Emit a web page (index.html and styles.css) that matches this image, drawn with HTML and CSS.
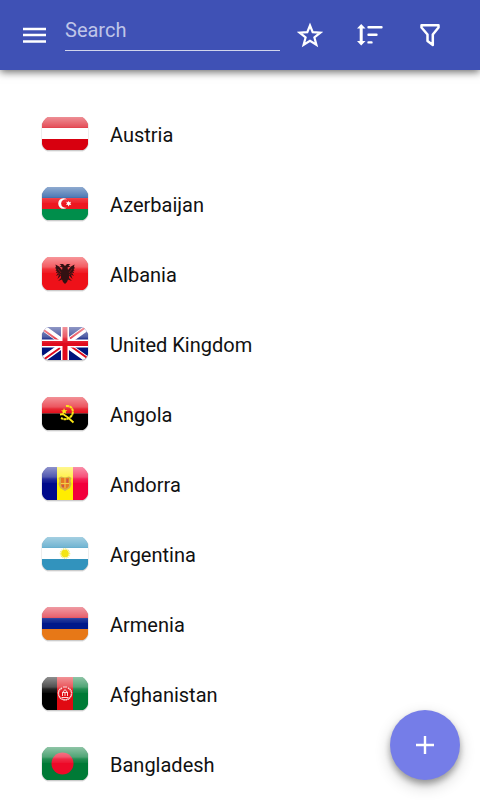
FILE: index.html
```
<!DOCTYPE html>
<html lang="en">
<head>
<meta charset="utf-8">
<meta name="viewport" content="width=device-width, initial-scale=1">
<title>Countries</title>
<link rel="stylesheet" href="styles.css">
</head>
<body>
<svg class="defs" aria-hidden="true">
  <defs>
    <clipPath id="shape"><path d="M7 1H41Q43 1.500 45 4.500L47 8V28Q46 32 42 34H6Q2 32 1 28V8L3 4.500Q5 1.500 7 1Z"/></clipPath>
    <linearGradient id="shine" x1="0" y1="0" x2="0" y2="1">
      <stop offset="0" stop-color="#fff" stop-opacity=".56"/>
      <stop offset=".62" stop-color="#fff" stop-opacity=".32"/>
      <stop offset=".75" stop-color="#fff" stop-opacity=".14"/>
      <stop offset="1" stop-color="#fff" stop-opacity=".04"/>
    </linearGradient>
    <g id="shadow"><path d="M7 2H41Q43 2.500 45 5L47 8V29Q46 33 42 35H6Q2 33 1 29V8L3 5Q5 2.500 7 2Z" fill="#bbb" stroke="#ddd" stroke-width="1"/></g>
    <g id="gloss"><path d="M1 1H47V17H1Z" fill="url(#shine)"/></g>
  </defs>
</svg>

<header class="bar">
  <button class="icon-button" type="button" aria-label="Menu">
    <svg width="24" height="18" viewBox="0 0 24 18"><path d="M0 3H23M0 9H23M0 15.500H23" stroke="#fff" stroke-width="2.500"/></svg>
  </button>
  <input class="search" type="search" placeholder="Search" aria-label="Search">
  <nav class="actions">
    <button class="icon-button" type="button" aria-label="Favorites">
      <svg width="26" height="26" viewBox="0 0 26 26"><path d="M13 3.500L15.700 10.200L23.300 10.700L17.400 15.500L19.400 22.800L13 18.900L6.600 22.800L8.600 15.500L2.700 10.700L10.300 10.200Z" fill="none" stroke="#fff" stroke-width="2.200"/></svg>
    </button>
    <button class="icon-button" type="button" aria-label="Sort">
      <svg width="26" height="26" viewBox="0 0 26 26" fill="#fff"><path d="M4.200 2L8.500 6.500H5.700V19H8.500L4.200 23.500L0 19H2.700V6.500H0Z"/><path d="M11.500 5.200H24.500M11.500 12.800H19.500M11.500 20.400H14.500" stroke="#fff" stroke-width="2.400" stroke-linecap="round"/></svg>
    </button>
    <button class="icon-button" type="button" aria-label="Filter">
      <svg width="26" height="26" viewBox="0 0 26 26"><path d="M4.500 3.300H21.500V5.500L15.800 12.500V23L10.500 19V12.500L4.500 5.500Z" fill="none" stroke="#fff" stroke-width="2.500" stroke-linejoin="round"/></svg>
    </button>
  </nav>
</header>

<main>
  <ul class="countries">
    <li><a class="country" href="#austria">
      <svg class="flag" viewBox="0 1 48 36" aria-hidden="true"><use href="#shadow"/><g clip-path="url(#shape)"><path fill="#d8000f" d="M1 1H47V34H1Z"/><path fill="#fff" d="M1 12H47V23H1Z"/><use href="#gloss"/></g></svg>
      <span>Austria</span></a></li>
    <li><a class="country" href="#azerbaijan">
      <svg class="flag" viewBox="0 1 48 36" aria-hidden="true"><use href="#shadow"/><g clip-path="url(#shape)"><path fill="#003f94" d="M1 1H47V12H1Z"/><path fill="#ed1720" d="M1 12H47V23H1Z"/><path fill="#008e4b" d="M1 23H47V34H1Z"/><use href="#gloss"/><path fill="#fff" d="M26 13.500A5.300 5.300 0 1 0 26 21.500A4.300 4.300 0 1 1 26 13.500Z"/><path fill="#fff" d="M27.500 14.700L28.200 16.300L30 15.700L29.300 17.400L30.300 18.900L28.500 18.800L27.500 20.400L26.700 18.800L25 18.900L26 17.400L25.200 15.700L26.900 16.200Z"/></g></svg>
      <span>Azerbaijan</span></a></li>
    <li><a class="country" href="#albania">
      <svg class="flag" viewBox="0 1 48 36" aria-hidden="true"><use href="#shadow"/><g clip-path="url(#shape)"><path fill="#ee1119" d="M1 1H47V34H1Z"/><use href="#gloss"/><path fill="#321112" d="M24 10L22 8L18.500 8L20.500 9.500L18.500 10.500L21.500 11.500L21 14L18 10.500L14.500 8.500L15 11L14 12L15.500 13L14.500 14.500L16 15L15 17L17 17L15 20L18 18.500L16.500 23L20 19.500L20 22L17 25L21 23.500L22 26L24 28L26 26L27 23.500L31 25L28 22L28 19.500L31.500 23L30 18.500L33 20L31 17L33 17L32 15L33.500 14.500L32.500 13L34 12L33 11L33.500 8.500L30 10.500L27 14L26.500 11.500L29.500 10.500L27.500 9.500L29.500 8L26 8Z"/><path d="M17 13L20 17M31 13L28 17M16 16L20 19M32 16L28 19" stroke="#9d1418" stroke-width=".7"/></g></svg>
      <span>Albania</span></a></li>
    <li><a class="country" href="#united-kingdom">
      <svg class="flag" viewBox="0 1 48 36" aria-hidden="true"><use href="#shadow"/><g clip-path="url(#shape)"><path fill="#00137b" d="M1 1H47V34H1Z"/><path d="M1 1L47 34M47 1L1 34" stroke="#fff" stroke-width="6"/><path d="M2 3.500L20 16.500M29 12.500L45 1M28 19L47 32.500M19 22L2 34" stroke="#e00a1c" stroke-width="2"/><path d="M24 1V34M1 17.500H47" stroke="#fff" stroke-width="8"/><path d="M24 1V34M1 17.500H47" stroke="#e00a1c" stroke-width="5"/><use href="#gloss"/></g></svg>
      <span>United Kingdom</span></a></li>
    <li><a class="country" href="#angola">
      <svg class="flag" viewBox="0 1 48 36" aria-hidden="true"><use href="#shadow"/><g clip-path="url(#shape)"><path fill="#e30613" d="M1 1H47V17.500H1Z"/><path fill="#000" d="M1 17.500H47V34H1Z"/><use href="#gloss"/><path d="M25 10C33 9 34 19 28 22C25 24 22 23 20 22" fill="none" stroke="#fbe616" stroke-width="2" stroke-dasharray="3 .4"/><path d="M19 18.500L22 18Q27 21 32.500 26.500" fill="none" stroke="#fbe616" stroke-width="1.800"/><path fill="#fbe616" d="M23 12L24 14.200L26.300 14.100L24.600 15.700L25.400 17.800L23.300 16.800L21.500 18L21.700 15.700L20 14.600L22.200 14.200Z"/></g></svg>
      <span>Angola</span></a></li>
    <li><a class="country" href="#andorra">
      <svg class="flag" viewBox="0 1 48 36" aria-hidden="true"><use href="#shadow"/><g clip-path="url(#shape)"><path fill="#000a8b" d="M1 1H16V34H1Z"/><path fill="#ffed00" d="M16 1H32V34H16Z"/><path fill="#f2003c" d="M32 1H47V34H32Z"/><use href="#gloss"/><path fill="#d6b04b" d="M17.500 12L20 10.500L24 11.500L28 10.500L30.500 12L29.500 15L30.500 18L29 22L24 25L19 22L17.500 18L18.500 15Z"/><path fill="#e77a22" d="M20 12H28V20Q27 22 24 23Q21 22 20 20Z"/><path fill="#f3d04a" d="M23.500 12H24.500V22.500H23.500ZM20 17H28V18H20Z"/><path fill="#c7564b" d="M25.500 13H27V16.500H25.500ZM21 19H23V21H21Z"/></g></svg>
      <span>Andorra</span></a></li>
    <li><a class="country" href="#argentina">
      <svg class="flag" viewBox="0 1 48 36" aria-hidden="true"><use href="#shadow"/><g clip-path="url(#shape)"><path fill="#3293bd" d="M1 1H47V34H1Z"/><path fill="#fff" d="M1 12H47V23H1Z"/><use href="#gloss"/><circle cx="24" cy="17.500" r="4.500" fill="none" stroke="#f4e86c" stroke-width="1.500" stroke-dasharray="1 .7"/><circle cx="24" cy="17.500" r="3.800" fill="#f3e414"/></g></svg>
      <span>Argentina</span></a></li>
    <li><a class="country" href="#armenia">
      <svg class="flag" viewBox="0 1 48 36" aria-hidden="true"><use href="#shadow"/><g clip-path="url(#shape)"><path fill="#dc1b2d" d="M1 1H47V12H1Z"/><path fill="#00198a" d="M1 12H47V23H1Z"/><path fill="#e77817" d="M1 23H47V34H1Z"/><use href="#gloss"/></g></svg>
      <span>Armenia</span></a></li>
    <li><a class="country" href="#afghanistan">
      <svg class="flag" viewBox="0 1 48 36" aria-hidden="true"><use href="#shadow"/><g clip-path="url(#shape)"><path fill="#000" d="M1 1H16V34H1Z"/><path fill="#e00a12" d="M16 1H32V34H16Z"/><path fill="#007a36" d="M32 1H47V34H32Z"/><use href="#gloss"/><g fill="none" stroke="#fbdada"><path stroke-width="1.500" stroke-dasharray="1.500 .4" d="M21 12Q17 14 17.500 18Q18 23 24 24Q30 23 30.500 18Q31 14 27 12"/><path d="M20.500 21.500H27.500M21 16.500H27M21.500 20V16.500L24 13.500L26.500 16.500V20M24 16V20M22 11H26"/></g></g></svg>
      <span>Afghanistan</span></a></li>
    <li><a class="country" href="#bangladesh">
      <svg class="flag" viewBox="0 1 48 36" aria-hidden="true"><use href="#shadow"/><g clip-path="url(#shape)"><path fill="#007a36" d="M1 1H47V34H1Z"/><circle cx="21.500" cy="17.500" r="11" fill="#ed0928"/><use href="#gloss"/></g></svg>
      <span>Bangladesh</span></a></li>
  </ul>
</main>

<button class="add" type="button" aria-label="Add">
  <svg width="18" height="18" viewBox="0 0 18 18"><path d="M9 0V18M0 9H18" stroke="#fff" stroke-width="2.400"/></svg>
</button>
</body>
</html>
```
FILE: styles.css
```
* {
  box-sizing: border-box;
}

body {
  margin: 0;
  background: #fff;
  color: #111;
  font-family: Roboto, "Liberation Sans", sans-serif;
  font-size: 20px;
  line-height: 24px;
}

button {
  display: flex;
  align-items: center;
  justify-content: center;
  padding: 0;
  border: 0;
  background: none;
  cursor: pointer;
}

.defs {
  position: absolute;
  width: 0;
  height: 0;
}

.bar {
  display: flex;
  align-items: center;
  height: 70px;
  padding: 0 20px 0 5px;
  background: #3f51b5;
  box-shadow: 0 2px 8px rgba(0, 0, 0, 0.6);
}

.icon-button {
  width: 60px;
  height: 60px;
  flex: none;
}

.search {
  flex: 1;
  min-width: 0;
  height: 42px;
  margin-bottom: 10px;
  padding: 0;
  border: 0;
  border-bottom: 1px solid #d0d4ec;
  border-radius: 0;
  outline: 0;
  background: none;
  color: #fff;
  font: inherit;
  appearance: none;
}

.search::placeholder {
  color: #bfc5e8;
  opacity: 1;
}

.actions {
  display: flex;
}

.countries {
  margin: 0;
  padding: 30px 0 0;
  list-style: none;
}

.country {
  display: flex;
  align-items: center;
  gap: 21px;
  height: 70px;
  padding: 0 41px;
  color: inherit;
  text-decoration: none;
}

.flag {
  width: 48px;
  height: 36px;
  flex: none;
}

.add {
  position: fixed;
  right: 20px;
  bottom: 20px;
  width: 70px;
  height: 70px;
  border-radius: 50%;
  background: #757de8;
  box-shadow: 0 4px 6px rgba(0, 0, 0, 0.3), 0 6px 16px rgba(0, 0, 0, 0.2);
}
```
